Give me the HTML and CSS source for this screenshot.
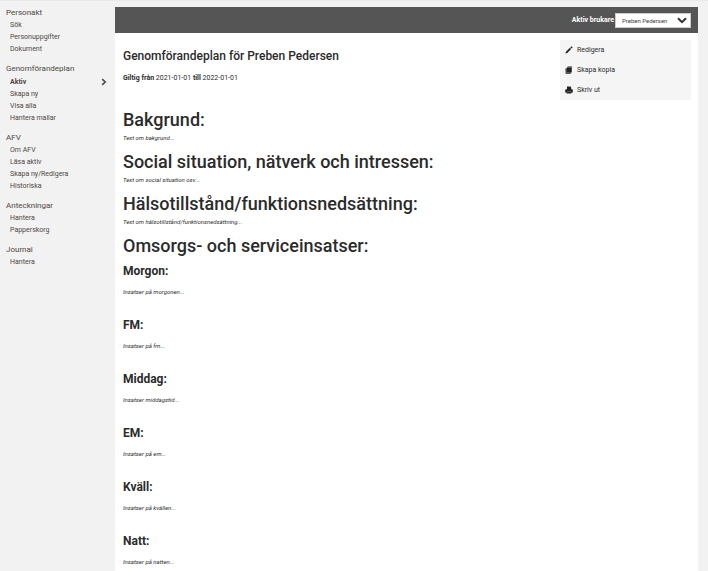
FILE: index.html
```html
<!DOCTYPE html>
<html lang="sv">
<head>
  <meta charset="UTF-8">
  <meta name="viewport" content="width=device-width, initial-scale=1.0">
  <title>Genomförandeplan</title>
  <link rel="stylesheet" href="styles.css">
</head>
<body>
  <div class="page">
    <nav class="sidebar">
      <div class="menu-group">
        <h4>Personakt</h4>
        <a href="#">Sök</a>
        <a href="#">Personuppgifter</a>
        <a href="#">Dokument</a>
      </div>
      <div class="menu-group">
        <h4>Genomförandeplan</h4>
        <a href="#" class="active">Aktiv
          <svg class="chevron" viewBox="0 0 6 8"><path d="M1.2 1.2L4.2 4L1.2 6.8" fill="none" stroke="#4f4742" stroke-width="1.6"/></svg>
        </a>
        <a href="#">Skapa ny</a>
        <a href="#">Visa alla</a>
        <a href="#">Hantera mallar</a>
      </div>
      <div class="menu-group">
        <h4>AFV</h4>
        <a href="#">Om AFV</a>
        <a href="#">Läsa aktiv</a>
        <a href="#">Skapa ny/Redigera</a>
        <a href="#">Historiska</a>
      </div>
      <div class="menu-group">
        <h4>Anteckningar</h4>
        <a href="#">Hantera</a>
        <a href="#">Papperskorg</a>
      </div>
      <div class="menu-group">
        <h4>Journal</h4>
        <a href="#">Hantera</a>
      </div>
    </nav>

    <main class="main">
      <header class="topbar">
        <label for="user">Aktiv brukare</label>
        <div class="select-box">
          <select id="user">
            <option>Preben Pedersen</option>
          </select>
          <svg class="select-arrow" viewBox="0 0 10 7"><path d="M1 1.2L5 5.2L9 1.2" fill="none" stroke="#333" stroke-width="2"/></svg>
        </div>
      </header>

      <div class="content">
        <article class="plan">
          <h2 class="plan-title">Genomförandeplan för Preben Pedersen</h2>
          <p class="valid"><b>Giltig från</b> 2021-01-01 <b>till</b> 2022-01-01</p>

          <h1>Bakgrund:</h1>
          <p class="text">Text om bakgrund...</p>
          <h1>Social situation, nätverk och intressen:</h1>
          <p class="text">Text om social situation osv...</p>
          <h1>Hälsotillstånd/funktionsnedsättning:</h1>
          <p class="text">Text om hälsotillstånd/funktionsnedsättning...</p>
          <h1>Omsorgs- och serviceinsatser:</h1>

          <section class="insats">
            <h3>Morgon:</h3>
            <p class="text">Insatser på morgonen...</p>
          </section>
          <section class="insats">
            <h3>FM:</h3>
            <p class="text">Insatser på fm...</p>
          </section>
          <section class="insats">
            <h3>Middag:</h3>
            <p class="text">Insatser middagstid...</p>
          </section>
          <section class="insats">
            <h3>EM:</h3>
            <p class="text">Insatser på em...</p>
          </section>
          <section class="insats">
            <h3>Kväll:</h3>
            <p class="text">Insatser på kvällen...</p>
          </section>
          <section class="insats">
            <h3>Natt:</h3>
            <p class="text">Insatser på natten...</p>
          </section>
        </article>

        <aside class="actions">
          <button type="button">
            <svg viewBox="0 0 8 8"><path d="M0.4 7.6L1 5.7L4.9 1.8L6.1 3L2.3 6.9ZM5.3 1.4L6.2 0.5Q6.5 0.3 6.8 0.6L7.3 1.1Q7.6 1.4 7.4 1.7L6.5 2.6Z" fill="#222"/></svg>
            Redigera
          </button>
          <button type="button">
            <svg viewBox="0 0 8 8"><path d="M2.6 0.5H7V6.3H6.6V1H2.6ZM2.4 1.2H6.4V6.8H1.6V2ZM0.6 2.2H1.4V7H5.8V7.7H0.6Z" fill="#222"/></svg>
            Skapa kopia
          </button>
          <button type="button">
            <svg viewBox="0 0 8 8"><path d="M2 0.6H5.4L6.2 1.4V3.4H2ZM1 3.2H7Q7.8 3.2 7.8 4V6.4H6.4V7.5H1.6V6.4H0.2V4Q0.2 3.2 1 3.2Z" fill="#222"/><path d="M2 5.5H6" stroke="#999" stroke-width="0.5"/></svg>
            Skriv ut
          </button>
        </aside>
      </div>
    </main>
  </div>
</body>
</html>
```

FILE: styles.css
```css
* {
  box-sizing: border-box;
}
html {
  height: 100%;
}
body {
  height: 100%;
  margin: 0;
  overflow-y: auto;
  scrollbar-width: none;
  background: #f2f2f2;
  color: #2b2b2b;
  font-family: Roboto, "Liberation Sans", sans-serif;
  font-size: 7px;
  line-height: 12px;
}
h1, h2, h3, h4, p {
  margin: 0;
}

.page {
  display: flex;
  min-height: 100%;
  border-top: 1px solid #e9e9e9;
}

/* Left menu */
.sidebar {
  width: 115px;
  flex-shrink: 0;
  padding: 6px 8px 0 6px;
}
.menu-group {
  margin-bottom: 8px;
}
.menu-group h4 {
  font-size: 8px;
  font-weight: 400;
  color: #4f4742;
}
.menu-group a {
  display: flex;
  justify-content: space-between;
  align-items: center;
  padding-left: 4px;
  color: #4f4742;
  text-decoration: none;
}
.menu-group a.active {
  padding-top: 1px;
  font-weight: 700;
}
.chevron {
  width: 6px;
  height: 8px;
}

/* Main column */
.main {
  flex: 1;
  margin: 6px 10px 0 0;
  background: #fff;
}
.topbar {
  display: flex;
  justify-content: flex-end;
  align-items: center;
  gap: 1px;
  height: 26px;
  padding-right: 7px;
  background: #555;
}
.topbar label {
  color: #fff;
  font-weight: 700;
}
.select-box {
  position: relative;
  width: 76px;
}
.select-box select {
  display: block;
  width: 100%;
  height: 15px;
  padding: 0 6px;
  border: 1px solid #ccc;
  border-radius: 0;
  background: #fff;
  color: #444;
  font-family: inherit;
  font-size: 6px;
  appearance: none;
}
.select-arrow {
  position: absolute;
  top: 4px;
  right: 4px;
  width: 10px;
  height: 7px;
  pointer-events: none;
}

.content {
  display: flex;
  align-items: flex-start;
  padding: 7px 7px 0 8px;
}
.plan {
  flex: 1;
}
.plan-title {
  margin-top: 8px;
  font-size: 12px;
  font-weight: 500;
  line-height: 16px;
}
.valid {
  margin: 8px 0 24px;
}
.plan h1 {
  font-size: 18px;
  font-weight: 500;
  line-height: 24px;
}
.text {
  margin-bottom: 6px;
  font-size: 6px;
  font-style: italic;
}
.insats {
  margin-bottom: 19px;
}
.insats h3 {
  margin: 5px 0 7px;
  font-size: 12px;
  font-weight: 700;
  line-height: 16px;
}

/* Action box */
.actions {
  width: 131px;
  background: #f5f5f5;
}
.actions button {
  display: flex;
  align-items: center;
  gap: 4px;
  width: 100%;
  height: 20px;
  padding: 0 5px;
  border: 0;
  background: none;
  color: #2b2b2b;
  font-family: inherit;
  font-size: 7px;
  cursor: pointer;
}
.actions svg {
  width: 8px;
  height: 8px;
}
```
